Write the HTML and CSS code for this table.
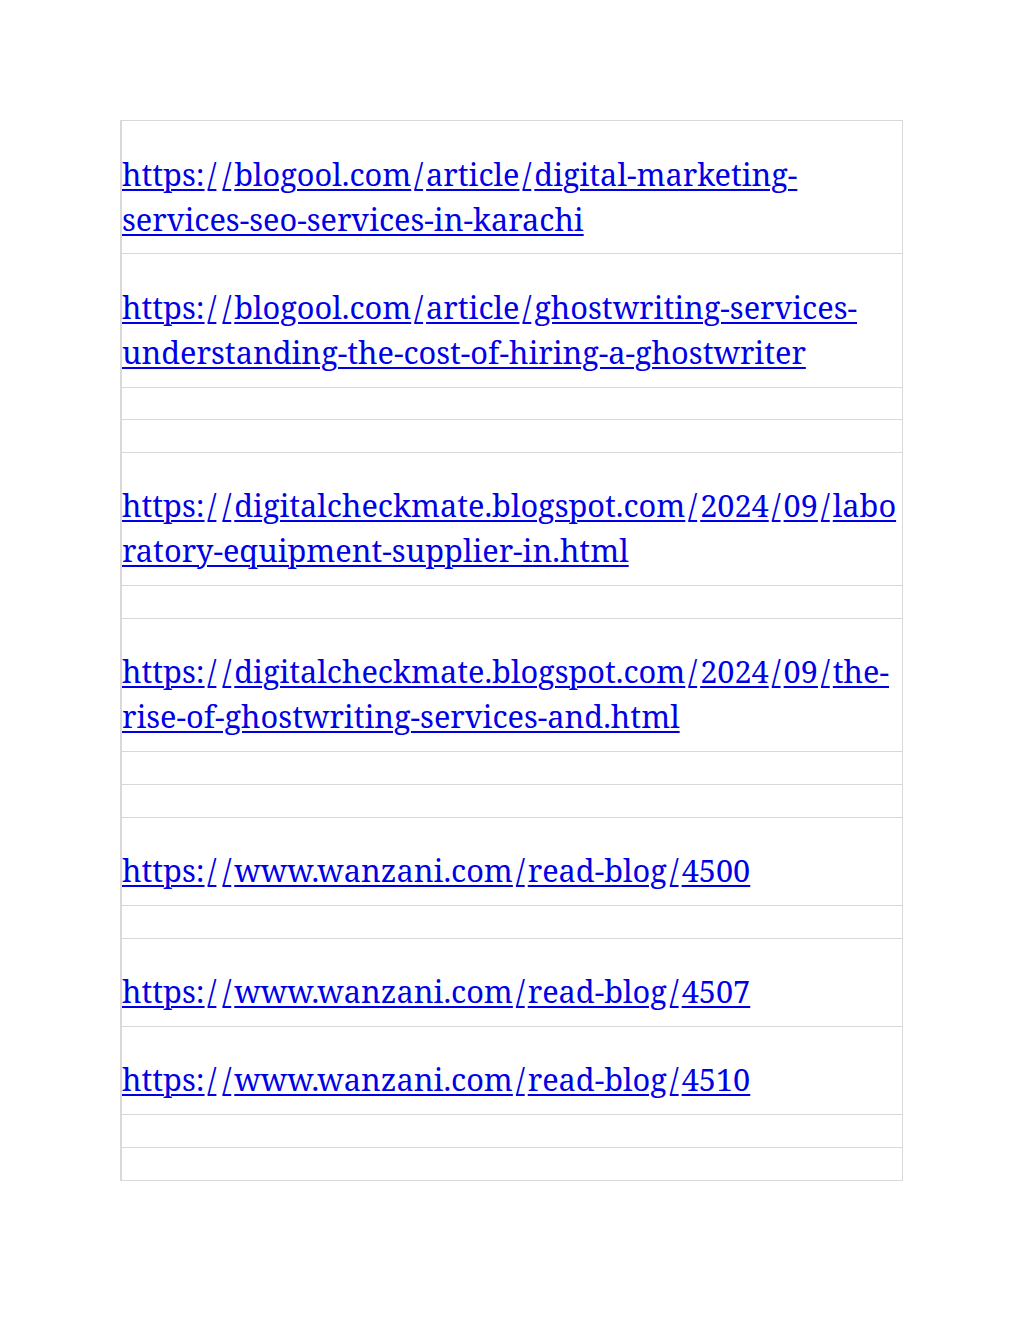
FILE: index.html
```html
<!DOCTYPE html>
<html lang="en">
<head>
<meta charset="utf-8">
<title>Links</title>
<link rel="stylesheet" href="styles.css">
</head>
<body>
<div class="page">
  <div class="sheet">
    <div class="row text"><a href="#">https:<span class="sl">/</span><span class="sl">/</span>blogool.com<span class="sl">/</span>article<span class="sl">/</span>digital-marketing-services-seo-services-in-karachi</a></div>
    <div class="row text"><a href="#">https:<span class="sl">/</span><span class="sl">/</span>blogool.com<span class="sl">/</span>article<span class="sl">/</span>ghostwriting-services-understanding-the-cost-of-hiring-a-ghostwriter</a></div>
    <div class="row empty"></div>
    <div class="row empty"></div>
    <div class="row text"><a href="#">https:<span class="sl">/</span><span class="sl">/</span>digitalcheckmate.blogspot.com<span class="sl">/</span>2024<span class="sl">/</span>09<span class="sl">/</span>laboratory-equipment-supplier-in.html</a></div>
    <div class="row empty"></div>
    <div class="row text"><a href="#">https:<span class="sl">/</span><span class="sl">/</span>digitalcheckmate.blogspot.com<span class="sl">/</span>2024<span class="sl">/</span>09<span class="sl">/</span>the-rise-of-ghostwriting-services-and.html</a></div>
    <div class="row empty"></div>
    <div class="row empty"></div>
    <div class="row text"><a href="#">https:<span class="sl">/</span><span class="sl">/</span>www.wanzani.com<span class="sl">/</span>read-blog<span class="sl">/</span>4500</a></div>
    <div class="row empty"></div>
    <div class="row text"><a href="#">https:<span class="sl">/</span><span class="sl">/</span>www.wanzani.com<span class="sl">/</span>read-blog<span class="sl">/</span>4507</a></div>
    <div class="row text"><a href="#">https:<span class="sl">/</span><span class="sl">/</span>www.wanzani.com<span class="sl">/</span>read-blog<span class="sl">/</span>4510</a></div>
    <div class="row empty"></div>
    <div class="row empty"></div>
  </div>
</div>
</body>
</html>
```
FILE: styles.css
```css
html, body {
  margin: 0;
  padding: 0;
  background: #ffffff;
}

.page {
  padding: 120px 0 0 120px;
}

.sheet {
  width: 780px;
  border: 1px solid #d9d9d9;
  border-left-width: 2px;
  font-family: "Noto Serif", "DejaVu Serif", serif;
  font-size: 30.7px;
  line-height: 45px;
}

.row + .row {
  border-top: 1px solid #d9d9d9;
}

.row.text {
  padding: 30.5px 0 11.8px 0;
  overflow-wrap: anywhere;
}

.row.empty {
  height: 31.7px;
}

.row a {
  color: #0000e6;
  text-decoration: underline;
  text-decoration-thickness: 1.5px;
  text-underline-offset: 3px;
}

.sl {
  margin: 0 3px;
}
```
